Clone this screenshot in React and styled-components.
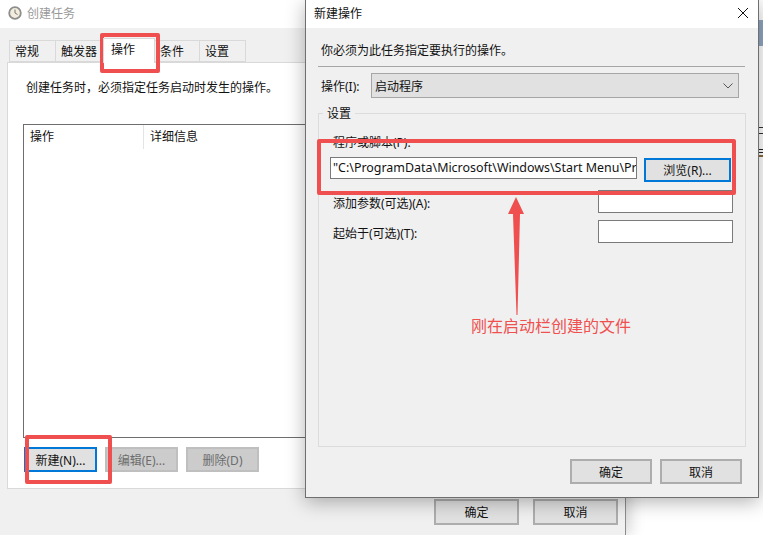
import React from "react";
import styled, { createGlobalStyle } from "styled-components";

const GlobalStyle = createGlobalStyle`
  html, body {
    margin: 0;
    padding: 0;
    background: #fff;
  }
  * {
    box-sizing: border-box;
  }
`;

const Desktop = styled.div`
  position: relative;
  width: 763px;
  height: 535px;
  overflow: hidden;
  background: #fff;
  color: #111;
  font-family: "Noto Sans", "Noto Sans CJK SC", sans-serif;
  font-size: 12px;
`;

// sliver of another window that shows to the right of the dialog
const BackStrip = styled.div`
  position: absolute;
  left: 740px;
  top: 0;
  width: 23px;
  height: 497px;
  background: linear-gradient(
    #fff 0 20px,
    #8fa8c2 20px 46px,
    #fff 46px 127px,
    #333 127px 128px,
    #fff 128px 133px,
    #333 133px 134px,
    #fff 134px 149px,
    #222 149px 150px,
    #fff 150px 152px,
    #222 152px 153px,
    #fff 153px 155px,
    #8a6a3a 155px 157px,
    #fff 157px
  );
`;

const ParentWindow = styled.div`
  position: absolute;
  left: 0;
  top: 0;
  width: 626px;
  height: 535px;
  display: flex;
  flex-direction: column;
  background: #f0f0f0;
  border-right: 1px solid #8c8c8c;
  box-shadow: 4px 0 14px rgba(0, 0, 0, 0.18);
`;

const TitleBar = styled.div`
  flex: none;
  height: 28px;
  display: flex;
  align-items: center;
  gap: 5px;
  padding: 0 8px 2px;
  background: #fff;
  color: ${(p) => (p.$inactive ? "#999" : "#111")};
`;

const Close = styled.svg`
  margin-left: auto;
  margin-right: 1px;
`;

const ParentBody = styled.div`
  flex: 1;
  padding: 12px 7px 0;
  display: flex;
  flex-direction: column;
`;

const Tabs = styled.div`
  display: flex;
  height: 22px;
  padding-left: 2px;
  align-items: flex-end;
`;

const Tab = styled.div`
  height: ${(p) => (p.$active ? 25 : 22)}px;
  width: ${(p) => p.$w}px;
  margin-bottom: ${(p) => (p.$active ? -1 : 0)}px;
  padding: ${(p) => (p.$active ? "2px 0 0 7px" : "2px 0 0 5px")};
  line-height: 18px;
  background: ${(p) => (p.$active ? "#fff" : "#f0f0f0")};
  border: 1px solid #d9d9d9;
  border-bottom: ${(p) => (p.$active ? "none" : "1px solid #d9d9d9")};
  border-left-width: ${(p) => (p.$first || p.$active ? 1 : 0)}px;
  position: relative;
  z-index: ${(p) => (p.$active ? 1 : 0)};
`;

const TabPanel = styled.div`
  width: 611px;
  height: 427px;
  padding: 0 15px;
  display: flex;
  flex-direction: column;
  background: #fff;
  border: 1px solid #d9d9d9;
`;

const Hint = styled.div`
  margin: 15px 0 0 3px;
  height: 20px;
  line-height: 20px;
`;

const ActionList = styled.div`
  margin-top: 26px;
  height: 314px;
  flex: none;
  border: 1px solid #6e6e6e;
`;

const ListHeader = styled.div`
  display: flex;
  height: 24px;
  line-height: 24px;
`;

const ListColumn = styled.div`
  width: ${(p) => p.$w}px;
  padding-left: 6px;
  border-right: 1px solid #e4e4e4;
`;

const PanelButtons = styled.div`
  display: flex;
  gap: 8px;
  margin-top: 9px;
  padding-left: 1px;
`;

const Button = styled.div`
  flex: none;
  width: ${(p) => p.$w}px;
  height: ${(p) => p.$h}px;
  display: flex;
  align-items: center;
  justify-content: center;
  background: ${(p) => (p.$disabled ? "#cccccc" : "#e1e1e1")};
  color: ${(p) => (p.$disabled ? "#6d6d6d" : "#111")};
  border: ${(p) =>
    p.$focused
      ? "2px solid #0078d7"
      : `2px solid ${p.$disabled ? "#bfbfbf" : "#adadad"}`};
`;

const WindowButtons = styled.div`
  display: flex;
  justify-content: flex-end;
  gap: 14px;
  margin-top: 10px;
  width: 611px;
`;

const Dialog = styled.div`
  position: absolute;
  left: 305px;
  top: 0;
  width: 454px;
  height: 498px;
  display: flex;
  flex-direction: column;
  background: #f0f0f0;
  border: 1px solid #6f6f6f;
  border-top: none;
  box-shadow: 0 4px 18px rgba(0, 0, 0, 0.3);
`;

const DialogBody = styled.div`
  flex: 1;
  padding: 12px 12px 0;
  display: flex;
  flex-direction: column;
`;

const Intro = styled.div`
  height: 20px;
  line-height: 22px;
  padding-left: 3px;
`;

const Divider = styled.div`
  margin-top: 6px;
  width: 427px;
  height: 1px;
  background: #a6a6a6;
`;

const ActionRow = styled.div`
  display: flex;
  align-items: center;
  margin-top: 6px;
  height: 25px;
`;

const ActionLabel = styled.div`
  width: 53px;
  padding-left: 3px;
`;

const Select = styled.div`
  width: 368px;
  height: 25px;
  display: flex;
  align-items: center;
  justify-content: space-between;
  padding: 0 4px 0 3px;
  background: #e1e1e1;
  border: 1px solid #a6a6a6;
`;

const Group = styled.div`
  position: relative;
  margin-top: 15px;
  width: 428px;
  height: 334px;
  flex: none;
  padding: 20px 11px 0;
  border: 1px solid #dcdcdc;
`;

const Legend = styled.div`
  position: absolute;
  left: 4px;
  top: -9px;
  padding: 0 4px;
  line-height: 18px;
  background: #f0f0f0;
`;

const FieldLabel = styled.div`
  height: 18px;
  line-height: 18px;
  padding-left: 3px;
`;

const PathRow = styled.div`
  display: flex;
  gap: 7px;
  margin-top: 5px;
  height: 25px;
  align-items: flex-end;
`;

const PathInput = styled.div`
  align-self: flex-start;
  width: 307px;
  height: 22px;
  padding-left: 2px;
  font-size: 12.45px;
  line-height: 20px;
  white-space: nowrap;
  overflow: hidden;
  background: #fff;
  border: 1px solid #7a7a7a;
`;

const FieldRow = styled.div`
  display: flex;
  justify-content: space-between;
  align-items: flex-end;
  width: 403px;
  margin-top: ${(p) => p.$gap}px;
`;

const TextInput = styled.div`
  width: 135px;
  height: 23px;
  background: #fff;
  border: 1px solid #7a7a7a;
`;

const DialogButtons = styled.div`
  display: flex;
  justify-content: flex-end;
  gap: 8px;
  margin-top: 12px;
  width: 424px;
`;

const Highlight = styled.div`
  position: absolute;
  left: ${(p) => p.$x}px;
  top: ${(p) => p.$y}px;
  width: ${(p) => p.$w}px;
  height: ${(p) => p.$h}px;
  border: 4px solid #ef4f4f;
  border-radius: 2px;
`;

const Arrow = styled.svg`
  position: absolute;
  left: 505px;
  top: 195px;
`;

const Note = styled.div`
  position: absolute;
  left: 471px;
  top: 315px;
  font-size: 16px;
  line-height: 22px;
  color: #ef5050;
`;

const ClockIcon = () => (
  <svg width="14" height="14" viewBox="0 0 14 14">
    <circle cx="7" cy="7" r="5.8" fill="#f1ecdc" stroke="#8d8d8d" strokeWidth="1.8" />
    <path d="M7 3.5V7L9.5 8.5" fill="none" stroke="#777" strokeWidth="1" />
  </svg>
);

const App = () => {
  return (
    <Desktop>
      <GlobalStyle />
      <BackStrip />

      <ParentWindow>
        <TitleBar $inactive>
          <ClockIcon />
          <span>创建任务</span>
        </TitleBar>
        <ParentBody>
          <Tabs>
            <Tab $w={47} $first>常规</Tab>
            <Tab $w={47}>触发器</Tab>
            <Tab $w={52} $active>操作</Tab>
            <Tab $w={45}>条件</Tab>
            <Tab $w={46}>设置</Tab>
          </Tabs>
          <TabPanel>
            <Hint>创建任务时，必须指定任务启动时发生的操作。</Hint>
            <ActionList>
              <ListHeader>
                <ListColumn $w={120}>操作</ListColumn>
                <ListColumn $w={200}>详细信息</ListColumn>
              </ListHeader>
            </ActionList>
            <PanelButtons>
              <Button $w={73} $h={25} $focused>新建(N)...</Button>
              <Button $w={73} $h={25} $disabled>编辑(E)...</Button>
              <Button $w={73} $h={25} $disabled>删除(D)</Button>
            </PanelButtons>
          </TabPanel>
          <WindowButtons>
            <Button $w={85} $h={26}>确定</Button>
            <Button $w={85} $h={26}>取消</Button>
          </WindowButtons>
        </ParentBody>
      </ParentWindow>

      <Dialog>
        <TitleBar>
          <span>新建操作</span>
          <Close width="12" height="12" viewBox="0 0 12 12">
            <path d="M1 1L11 11M11 1L1 11" stroke="#111" strokeWidth="1" />
          </Close>
        </TitleBar>
        <DialogBody>
          <Intro>你必须为此任务指定要执行的操作。</Intro>
          <Divider />
          <ActionRow>
            <ActionLabel>操作(I):</ActionLabel>
            <Select>
              <span>启动程序</span>
              <svg width="12" height="8" viewBox="0 0 12 8">
                <path d="M1.5 1.5L6 6L10.5 1.5" fill="none" stroke="#555" strokeWidth="1" />
              </svg>
            </Select>
          </ActionRow>
          <Group>
            <Legend>设置</Legend>
            <FieldLabel>程序或脚本(P):</FieldLabel>
            <PathRow>
              <PathInput>"C:\ProgramData\Microsoft\Windows\Start Menu\Pr</PathInput>
              <Button $w={87} $h={24} $focused>浏览(R)...</Button>
            </PathRow>
            <FieldRow $gap={8}>
              <FieldLabel>添加参数(可选)(A):</FieldLabel>
              <TextInput />
            </FieldRow>
            <FieldRow $gap={7}>
              <FieldLabel>起始于(可选)(T):</FieldLabel>
              <TextInput />
            </FieldRow>
          </Group>
          <DialogButtons>
            <Button $w={82} $h={25}>确定</Button>
            <Button $w={82} $h={25}>取消</Button>
          </DialogButtons>
        </DialogBody>
      </Dialog>

      <Highlight $x={100} $y={33} $w={60} $h={40} />
      <Highlight $x={25} $y={435} $w={87} $h={49} />
      <Highlight $x={317} $y={139} $w={419} $h={56} />
      <Arrow width="24" height="122" viewBox="0 0 24 122">
        <path d="M11 2L19 19H15L12.5 120H11.5L8 19H3Z" fill="#ef4f4f" />
      </Arrow>
      <Note>刚在启动栏创建的文件</Note>
    </Desktop>
  );
};

export default App;
